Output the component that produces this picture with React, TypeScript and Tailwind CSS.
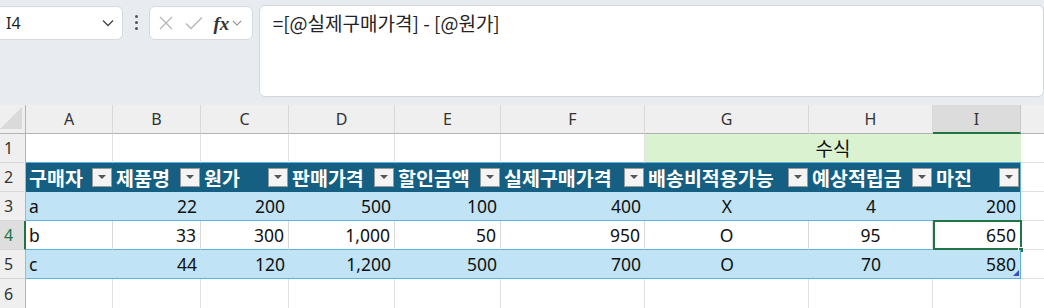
import React from "react";

const FONT = { fontFamily: '"Noto Sans", "Noto Sans CJK KR", sans-serif' };
const KR = { fontFamily: '"Noto Sans CJK KR", "Noto Sans", sans-serif' };

const cols = ["A", "B", "C", "D", "E", "F", "G", "H", "I"];
const headers = ["구매자", "제품명", "원가", "판매가격", "할인금액", "실제구매가격", "배송비적용가능", "예상적립금", "마진"];
const rows = [
  ["a", "22", "200", "500", "100", "400", "X", "4", "200"],
  ["b", "33", "300", "1,000", "50", "950", "O", "95", "650"],
  ["c", "44", "120", "1,200", "500", "700", "O", "70", "580"],
];

function Chevron({ className }: { className?: string }) {
  return (
    <svg width="12" height="8" viewBox="0 0 12 8" className={className}>
      <path d="M1 1.5 L6 6.5 L11 1.5" fill="none" stroke="currentColor" strokeWidth="1.3" />
    </svg>
  );
}

function DropBtn() {
  return (
    <div className="w-[20px] h-[19px] mr-[1px] bg-[#f4f4f4] border border-[#9a9a9a] flex items-center justify-center shrink-0">
      <svg width="8" height="5" viewBox="0 0 8 5">
        <path d="M0 0 L8 0 L4 4 Z" fill="#555" />
      </svg>
    </div>
  );
}

export default function App() {
  return (
    <div className="w-[1044px] h-[308px] overflow-hidden bg-[#e8ecf1] text-[#222]" style={FONT}>
      {/* Top bar */}
      <div className="h-[105px] flex items-start pt-[5px] relative">
        <div className="w-[125px] h-[34px] mt-[1px] bg-white rounded-r-[6px] border border-l-0 border-[#d6d9de] flex items-center justify-between pl-[6px] pr-[8px]">
          <span className="text-[16px] text-[#1f1f1f]">I4</span>
          <Chevron className="text-[#444]" />
        </div>
        <div className="w-[27px] h-[35px] flex flex-col items-center justify-center gap-[3px]">
          <div className="w-[3px] h-[3px] bg-[#555] rounded-full" />
          <div className="w-[3px] h-[3px] bg-[#555] rounded-full" />
          <div className="w-[3px] h-[3px] bg-[#555] rounded-full" />
        </div>
        <div className="w-[105px] h-[34px] mt-[1px] bg-white rounded-[6px] border border-[#d6d9de] flex items-center pl-[7px]">
          <svg width="16" height="16" viewBox="0 0 16 16" className="ml-[1px]">
            <path d="M2 2 L14 14 M14 2 L2 14" stroke="#b5b5b5" strokeWidth="1.3" fill="none" />
          </svg>
          <svg width="18" height="16" viewBox="0 0 18 16" className="ml-[11px]">
            <path d="M1 8.5 L6 13.5 L17 2.5" stroke="#b5b5b5" strokeWidth="1.3" fill="none" />
          </svg>
          <span className="ml-[10px] text-[19px] italic font-semibold text-[#333] leading-none" style={{ fontFamily: '"Liberation Serif", serif' }}>
            fx
          </span>
          <Chevron className="ml-[3px] text-[#888] w-[10px]" />
        </div>
        <div className="ml-[6px] w-[800px] h-[92px] bg-white rounded-[6px] border border-[#d3d6db] pl-[13px] pt-[3px]">
          <span className="text-[19px] text-[#222]" style={KR}>
            =[@실제구매가격] - [@원가]
          </span>
        </div>
      </div>

      {/* Grid */}
      <div className="grid grid-cols-[26px_87px_88px_88px_106px_106px_144px_164px_124px_88px_1fr] auto-rows-[29px] bg-white">
        {/* column header row */}
        <div className="bg-[#efefef] border-b border-r border-[#b3b3b3] relative">
          <svg width="22" height="22" viewBox="0 0 22 22" className="absolute right-[3px] bottom-[4px]">
            <path d="M22 0 L22 22 L0 22 Z" fill="#dadada" />
          </svg>
        </div>
        {cols.map((c) =>
          c === "I" ? (
            <div key={c} className="bg-[#dcdcdc] border-b-2 border-b-[#217346] border-r border-r-[#c8c8c8] flex items-center justify-center text-[16px] text-[#333]">
              {c}
            </div>
          ) : (
            <div key={c} className="bg-[#efefef] border-b border-b-[#b3b3b3] border-r border-r-[#d8d8d8] flex items-center justify-center text-[16px] text-[#333]">
              {c}
            </div>
          )
        )}
        <div className="bg-[#efefef] border-b border-b-[#b3b3b3]" />

        {/* row 1 */}
        <div className="bg-[#efefef] border-b border-r border-b-[#d8d8d8] border-r-[#b3b3b3] flex items-center pl-[4px] text-[16px] text-[#333]">1</div>
        {cols.slice(0, 6).map((c) => (
          <div key={c} className="border-r border-b border-r-[#e1e1e1] border-b-[#62b0dc]" />
        ))}
        <div className="col-span-3 bg-[#daf2d0] border-b border-b-[#62b0dc] flex items-center justify-center text-[19px] text-[#111]" style={KR}>
          수식
        </div>
        <div className="border-b border-b-[#e1e1e1]" />

        {/* row 2 - table header */}
        <div className="bg-[#efefef] border-b border-r border-b-[#d8d8d8] border-r-[#b3b3b3] flex items-center pl-[4px] text-[16px] text-[#333]">2</div>
        {headers.map((h, i) => (
          <div
            key={h}
            className={`bg-[#156082] flex items-center justify-between pl-[3px] text-white text-[19.5px] font-bold leading-[27px] ${i === 8 ? "border-r border-r-[#62b0dc]" : ""}`}
            style={KR}
          >
            <span className="whitespace-nowrap">{h}</span>
            <DropBtn />
          </div>
        ))}
        <div className="border-b border-b-[#e1e1e1]" />

        {/* data rows */}
        {rows.map((r, ri) => {
          const band = ri !== 1;
          const rowNum = ri + 3;
          return (
            <React.Fragment key={ri}>
              {rowNum === 4 ? (
                <div className="bg-[#dedede] border-b border-b-[#d8d8d8] border-r-2 border-r-[#217346] flex items-center pl-[4px] text-[16px] text-[#217346]">
                  4
                </div>
              ) : (
                <div className="bg-[#efefef] border-b border-r border-b-[#d8d8d8] border-r-[#b3b3b3] flex items-center pl-[4px] text-[16px] text-[#333]">
                  {rowNum}
                </div>
              )}
              {r.map((v, ci) => {
                const align = ci === 0 ? "justify-start pl-[3px]" : ci === 6 || ci === 7 ? "justify-center" : "justify-end pr-[4px]";
                const vert = band ? "" : "border-r border-r-[#dadada]";
                const last = ci === 8 ? "border-r border-r-[#62b0dc]" : vert;
                return (
                  <div
                    key={ci}
                    className={`relative flex items-center ${align} text-[17.5px] text-[#111] border-b border-b-[#62b0dc] ${band ? "bg-[#c0e4f5]" : "bg-white"} ${last}`}
                  >
                    {v}
                    {rowNum === 4 && ci === 8 && (
                      <>
                        <div className="absolute left-0 top-[-1px] right-[-2px] bottom-[-1px] border-2 border-[#217346]" />
                        <div className="absolute right-[-4px] bottom-[-4px] w-[6px] h-[6px] bg-[#217346] border border-white" />
                      </>
                    )}
                    {rowNum === 5 && ci === 8 && (
                      <svg width="6" height="6" viewBox="0 0 6 6" className="absolute right-[1px] bottom-[2px]">
                        <path d="M6 0 L6 6 L0 6 Z" fill="#3a4dbd" />
                      </svg>
                    )}
                  </div>
                );
              })}
              <div className="border-b border-b-[#e1e1e1]" />
            </React.Fragment>
          );
        })}

        {/* row 6 */}
        <div className="bg-[#efefef] border-r border-r-[#b3b3b3] flex items-center pl-[4px] text-[16px] text-[#333]">6</div>
        {cols.map((c) => (
          <div key={c} className="border-r border-r-[#e1e1e1]" />
        ))}
        <div />
      </div>
    </div>
  );
}
